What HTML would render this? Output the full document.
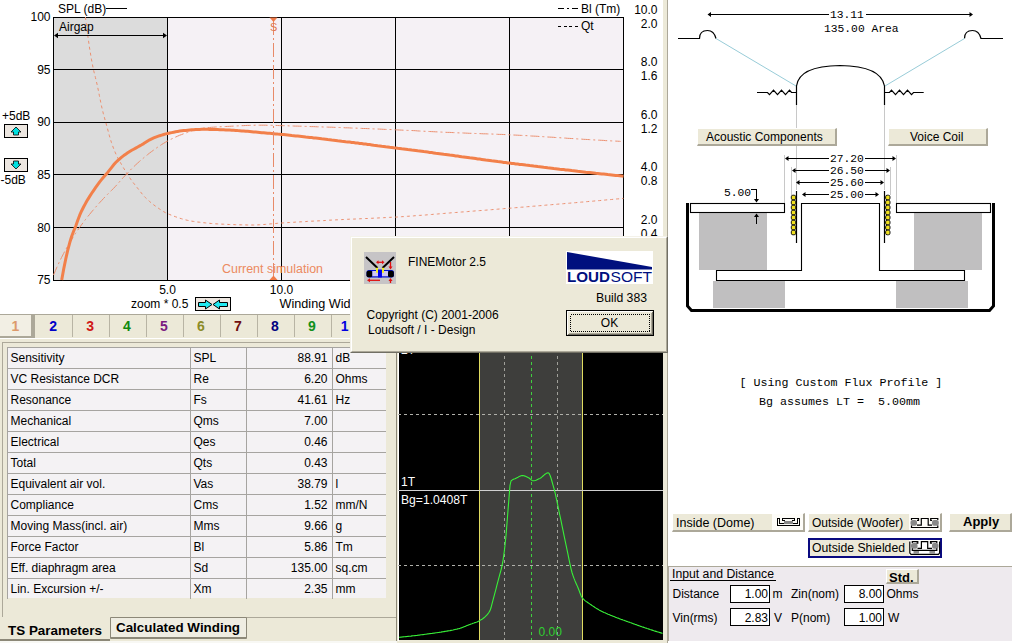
<!DOCTYPE html>
<html><head><meta charset="utf-8">
<style>
*{margin:0;padding:0;box-sizing:border-box}
html,body{width:1012px;height:643px;overflow:hidden;background:#ece9d8;font-family:"Liberation Sans",sans-serif;font-size:12px;color:#000}
.a{position:absolute}
svg{position:absolute;left:0;top:0;overflow:visible}
.mono{font-family:"Liberation Mono",monospace}
svg .m text, svg text.m{font-family:"Liberation Mono",monospace}
</style></head><body>

<!-- CHART PANEL -->
<div class="a" style="left:0;top:0;width:664px;height:314px;background:#fff"></div>
<svg width="664" height="314" style="left:0;top:0">
  <rect x="53" y="17" width="114" height="263" fill="#dcdcdc"/>
  <rect x="167" y="17" width="456" height="263" fill="#f5f1f5"/>
  <g stroke="#000" stroke-width="1" shape-rendering="crispEdges">
    <line x1="53" y1="17.5" x2="624" y2="17.5"/>
    <line x1="53" y1="69.5" x2="624" y2="69.5"/>
    <line x1="53" y1="122.5" x2="624" y2="122.5"/>
    <line x1="53" y1="174.5" x2="624" y2="174.5"/>
    <line x1="53" y1="227.5" x2="624" y2="227.5"/>
    <line x1="53" y1="280.5" x2="624" y2="280.5"/>
    <line x1="53.5" y1="17" x2="53.5" y2="281"/>
    <line x1="167.5" y1="17" x2="167.5" y2="281"/>
    <line x1="281.5" y1="17" x2="281.5" y2="281"/>
    <line x1="395.5" y1="17" x2="395.5" y2="281"/>
    <line x1="509.5" y1="17" x2="509.5" y2="281"/>
    <line x1="623.5" y1="17" x2="623.5" y2="281"/>
  </g>
  <g fill="none" stroke-linejoin="round">
    <path d="M85.4,17.0 L87.4,32.9 L89.4,47.0 L91.4,59.1 L93.4,69.5 L95.4,77.4 L97.4,85.8 L99.4,95.7 L101.4,105.6 L103.4,113.9 L105.4,121.1 L107.4,128.3 L109.4,135.8 L111.4,142.4 L113.4,148.0 L115.4,152.9 L117.4,157.2 L119.4,160.8 L121.4,164.3 L123.4,167.7 L125.4,171.0 L127.4,174.2 L129.4,177.3 L131.4,180.2 L133.4,182.9 L135.4,185.4 L137.4,187.9 L139.4,190.4 L141.4,193.0 L143.4,195.5 L145.4,197.6 L147.4,199.5 L149.4,201.3 L151.4,203.0 L153.4,204.6 L155.4,206.1 L157.4,207.5 L159.4,208.9 L161.4,210.2 L163.4,211.5 L165.4,212.6 L167.4,213.6 L169.4,214.4 L171.4,215.2 L173.4,216.0 L175.4,216.7 L177.4,217.4 L179.4,218.1 L181.4,218.7 L183.4,219.3 L185.4,219.8 L187.4,220.3 L189.4,220.7 L191.4,221.1 L193.4,221.4 L195.4,221.7 L197.4,222.0 L199.4,222.2 L201.4,222.5 L203.4,222.7 L205.4,222.9 L207.4,223.1 L209.4,223.3 L211.4,223.5 L213.4,223.6 L215.4,223.8 L217.4,223.9 L219.4,224.0 L221.4,224.1 L223.4,224.2 L225.4,224.3 L227.4,224.4 L229.4,224.5 L231.4,224.6 L233.4,224.6 L235.4,224.7 L237.4,224.7 L239.4,224.8 L241.4,224.8 L243.4,224.9 L245.4,224.9 L247.4,225.0 L249.4,225.0 L251.4,225.0 L253.4,225.0 L255.4,225.0 L257.4,224.9 L259.4,224.8 L261.4,224.7 L263.4,224.5 L265.4,224.4 L267.4,224.2 L269.4,224.0 L271.4,223.8 L273.4,223.6 L275.4,223.5 L277.4,223.3 L279.4,223.1 L281.4,223.0 L283.4,222.9 L285.4,222.7 L287.4,222.6 L289.4,222.5 L291.4,222.4 L293.4,222.3 L295.4,222.1 L297.4,222.0 L299.4,221.9 L301.4,221.8 L303.4,221.7 L305.4,221.6 L307.4,221.4 L309.4,221.3 L311.4,221.2 L313.4,221.1 L315.4,221.0 L317.4,220.9 L319.4,220.8 L321.4,220.7 L323.4,220.6 L325.4,220.5 L327.4,220.4 L329.4,220.2 L331.4,220.1 L333.4,220.0 L335.4,219.9 L337.4,219.8 L339.4,219.7 L341.4,219.6 L343.4,219.5 L345.4,219.4 L347.4,219.3 L349.4,219.2 L351.4,219.2 L353.4,219.1 L355.4,219.0 L357.4,218.9 L359.4,218.8 L361.4,218.7 L363.4,218.6 L365.4,218.5 L367.4,218.5 L369.4,218.4 L371.4,218.3 L373.4,218.2 L375.4,218.1 L377.4,218.0 L379.4,217.9 L381.4,217.8 L383.4,217.7 L385.4,217.6 L387.4,217.5 L389.4,217.4 L391.4,217.3 L393.4,217.2 L395.4,217.1 L397.4,217.0 L399.4,216.9 L401.4,216.7 L403.4,216.6 L405.4,216.5 L407.4,216.3 L409.4,216.2 L411.4,216.0 L413.4,215.9 L415.4,215.7 L417.4,215.6 L419.4,215.4 L421.4,215.3 L423.4,215.1 L425.4,215.0 L427.4,214.8 L429.4,214.6 L431.4,214.5 L433.4,214.3 L435.4,214.1 L437.4,214.0 L439.4,213.8 L441.4,213.6 L443.4,213.5 L445.4,213.3 L447.4,213.1 L449.4,213.0 L451.4,212.8 L453.4,212.7 L455.4,212.5 L457.4,212.4 L459.4,212.2 L461.4,212.0 L463.4,211.9 L465.4,211.7 L467.4,211.6 L469.4,211.4 L471.4,211.3 L473.4,211.1 L475.4,210.9 L477.4,210.8 L479.4,210.6 L481.4,210.5 L483.4,210.3 L485.4,210.2 L487.4,210.0 L489.4,209.8 L491.4,209.7 L493.4,209.5 L495.4,209.4 L497.4,209.2 L499.4,209.0 L501.4,208.9 L503.4,208.7 L505.4,208.5 L507.4,208.4 L509.4,208.2 L511.4,208.1 L513.4,207.9 L515.4,207.7 L517.4,207.6 L519.4,207.4 L521.4,207.2 L523.4,207.1 L525.4,206.9 L527.4,206.7 L529.4,206.6 L531.4,206.4 L533.4,206.2 L535.4,206.1 L537.4,205.9 L539.4,205.7 L541.4,205.6 L543.4,205.4 L545.4,205.2 L547.4,205.0 L549.4,204.9 L551.4,204.7 L553.4,204.5 L555.4,204.4 L557.4,204.2 L559.4,204.0 L561.4,203.9 L563.4,203.7 L565.4,203.5 L567.4,203.3 L569.4,203.2 L571.4,203.0 L573.4,202.8 L575.4,202.7 L577.4,202.5 L579.4,202.3 L581.4,202.1 L583.4,202.0 L585.4,201.8 L587.4,201.6 L589.4,201.4 L591.4,201.3 L593.4,201.1 L595.4,200.9 L597.4,200.7 L599.4,200.6 L601.4,200.4 L603.4,200.2 L605.4,200.0 L607.4,199.8 L609.4,199.7 L611.4,199.5 L613.4,199.3 L615.4,199.1 L617.4,198.9 L619.4,198.8 L621.4,198.6 L623.4,198.4 L623.5,198.4" stroke="#ec9070" stroke-width="1" stroke-dasharray="3 3"/>
    <path d="M53.5,275.0 L55.5,270.4 L57.5,265.9 L59.5,261.6 L61.5,257.5 L63.5,253.7 L65.5,250.0 L67.5,246.4 L69.5,243.0 L71.5,239.7 L73.5,236.5 L75.5,233.5 L77.5,230.5 L79.5,227.6 L81.5,224.8 L83.5,222.1 L85.5,219.5 L87.5,216.9 L89.5,214.5 L91.5,212.0 L93.5,209.7 L95.5,207.3 L97.5,205.1 L99.5,202.8 L101.5,200.7 L103.5,198.5 L105.5,196.4 L107.5,194.4 L109.5,192.4 L111.5,190.4 L113.5,188.4 L115.5,186.3 L117.5,184.1 L119.5,181.8 L121.5,179.5 L123.5,177.3 L125.5,175.2 L127.5,173.1 L129.5,171.0 L131.5,168.9 L133.5,167.0 L135.5,165.0 L137.5,163.2 L139.5,161.4 L141.5,159.7 L143.5,158.0 L145.5,156.3 L147.5,154.7 L149.5,153.1 L151.5,151.6 L153.5,150.2 L155.5,148.7 L157.5,147.3 L159.5,146.0 L161.5,144.6 L163.5,143.4 L165.5,142.2 L167.5,141.1 L169.5,140.0 L171.5,139.0 L173.5,138.0 L175.5,137.1 L177.5,136.2 L179.5,135.3 L181.5,134.6 L183.5,133.8 L185.5,133.1 L187.5,132.4 L189.5,131.7 L191.5,131.0 L193.5,130.3 L195.5,129.7 L197.5,129.2 L199.5,128.8 L201.5,128.4 L203.5,128.1 L205.5,127.9 L207.5,127.7 L209.5,127.5 L211.5,127.3 L213.5,127.2 L215.5,127.0 L217.5,126.9 L219.5,126.8 L221.5,126.7 L223.5,126.6 L225.5,126.5 L227.5,126.4 L229.5,126.3 L231.5,126.2 L233.5,126.1 L235.5,126.0 L237.5,125.9 L239.5,125.8 L241.5,125.7 L243.5,125.6 L245.5,125.5 L247.5,125.4 L249.5,125.4 L251.5,125.3 L253.5,125.3 L255.5,125.2 L257.5,125.2 L259.5,125.2 L261.5,125.2 L263.5,125.2 L265.5,125.2 L267.5,125.3 L269.5,125.3 L271.5,125.3 L273.5,125.4 L275.5,125.4 L277.5,125.5 L279.5,125.6 L281.5,125.6 L283.5,125.7 L285.5,125.7 L287.5,125.8 L289.5,125.9 L291.5,125.9 L293.5,126.0 L295.5,126.1 L297.5,126.1 L299.5,126.2 L301.5,126.2 L303.5,126.3 L305.5,126.4 L307.5,126.4 L309.5,126.5 L311.5,126.6 L313.5,126.6 L315.5,126.7 L317.5,126.8 L319.5,126.8 L321.5,126.9 L323.5,127.0 L325.5,127.0 L327.5,127.1 L329.5,127.2 L331.5,127.2 L333.5,127.3 L335.5,127.4 L337.5,127.5 L339.5,127.5 L341.5,127.6 L343.5,127.7 L345.5,127.8 L347.5,127.8 L349.5,127.9 L351.5,128.0 L353.5,128.1 L355.5,128.1 L357.5,128.2 L359.5,128.3 L361.5,128.4 L363.5,128.5 L365.5,128.5 L367.5,128.6 L369.5,128.7 L371.5,128.8 L373.5,128.9 L375.5,129.0 L377.5,129.0 L379.5,129.1 L381.5,129.2 L383.5,129.3 L385.5,129.4 L387.5,129.5 L389.5,129.5 L391.5,129.6 L393.5,129.7 L395.5,129.8 L397.5,129.9 L399.5,130.0 L401.5,130.1 L403.5,130.2 L405.5,130.3 L407.5,130.4 L409.5,130.4 L411.5,130.5 L413.5,130.6 L415.5,130.7 L417.5,130.9 L419.5,131.0 L421.5,131.1 L423.5,131.2 L425.5,131.3 L427.5,131.4 L429.5,131.5 L431.5,131.6 L433.5,131.7 L435.5,131.8 L437.5,131.9 L439.5,132.0 L441.5,132.1 L443.5,132.2 L445.5,132.3 L447.5,132.4 L449.5,132.4 L451.5,132.5 L453.5,132.6 L455.5,132.7 L457.5,132.8 L459.5,132.9 L461.5,132.9 L463.5,133.0 L465.5,133.1 L467.5,133.2 L469.5,133.3 L471.5,133.3 L473.5,133.4 L475.5,133.5 L477.5,133.5 L479.5,133.6 L481.5,133.7 L483.5,133.8 L485.5,133.8 L487.5,133.9 L489.5,134.0 L491.5,134.0 L493.5,134.1 L495.5,134.2 L497.5,134.3 L499.5,134.4 L501.5,134.4 L503.5,134.5 L505.5,134.6 L507.5,134.7 L509.5,134.8 L511.5,134.9 L513.5,135.0 L515.5,135.1 L517.5,135.2 L519.5,135.3 L521.5,135.4 L523.5,135.5 L525.5,135.6 L527.5,135.7 L529.5,135.9 L531.5,136.0 L533.5,136.1 L535.5,136.2 L537.5,136.3 L539.5,136.5 L541.5,136.6 L543.5,136.7 L545.5,136.8 L547.5,137.0 L549.5,137.1 L551.5,137.2 L553.5,137.3 L555.5,137.5 L557.5,137.6 L559.5,137.7 L561.5,137.9 L563.5,138.0 L565.5,138.1 L567.5,138.3 L569.5,138.4 L571.5,138.5 L573.5,138.6 L575.5,138.8 L577.5,138.9 L579.5,139.0 L581.5,139.1 L583.5,139.3 L585.5,139.4 L587.5,139.5 L589.5,139.6 L591.5,139.8 L593.5,139.9 L595.5,140.0 L597.5,140.1 L599.5,140.2 L601.5,140.3 L603.5,140.4 L605.5,140.6 L607.5,140.7 L609.5,140.8 L611.5,140.9 L613.5,141.0 L615.5,141.1 L617.5,141.2 L619.5,141.3 L620.6,141.4" stroke="#ec9070" stroke-width="1" stroke-dasharray="9 3 2 3"/>
    <path d="M61.7,280.0 L63.7,269.0 L65.7,259.2 L67.7,250.4 L69.7,242.8 L71.7,236.2 L73.7,231.0 L75.7,226.3 L77.7,220.6 L79.7,215.2 L81.7,210.7 L83.7,206.8 L85.7,203.1 L87.7,199.6 L89.7,196.4 L91.7,193.3 L93.7,190.3 L95.7,187.4 L97.7,184.6 L99.7,181.9 L101.7,179.4 L103.7,177.0 L105.7,174.7 L107.7,172.4 L109.7,169.9 L111.7,167.3 L113.7,164.8 L115.7,162.5 L117.7,160.6 L119.7,158.8 L121.7,157.1 L123.7,155.6 L125.7,154.2 L127.7,152.8 L129.7,151.5 L131.7,150.3 L133.7,149.2 L135.7,148.1 L137.7,147.0 L139.7,145.9 L141.7,144.8 L143.7,143.6 L145.7,142.3 L147.7,141.0 L149.7,139.8 L151.7,138.8 L153.7,137.9 L155.7,137.1 L157.7,136.4 L159.7,135.7 L161.7,135.1 L163.7,134.5 L165.7,133.9 L167.7,133.5 L169.7,133.0 L171.7,132.6 L173.7,132.2 L175.7,131.8 L177.7,131.4 L179.7,131.1 L181.7,130.8 L183.7,130.6 L185.7,130.4 L187.7,130.2 L189.7,130.0 L191.7,129.8 L193.7,129.7 L195.7,129.5 L197.7,129.4 L199.7,129.4 L201.7,129.3 L203.7,129.3 L205.7,129.3 L207.7,129.3 L209.7,129.4 L211.7,129.4 L213.7,129.5 L215.7,129.5 L217.7,129.6 L219.7,129.7 L221.7,129.7 L223.7,129.8 L225.7,129.9 L227.7,130.0 L229.7,130.1 L231.7,130.2 L233.7,130.3 L235.7,130.4 L237.7,130.6 L239.7,130.7 L241.7,130.9 L243.7,131.0 L245.7,131.2 L247.7,131.3 L249.7,131.5 L251.7,131.7 L253.7,131.9 L255.7,132.1 L257.7,132.3 L259.7,132.5 L261.7,132.7 L263.7,132.8 L265.7,133.0 L267.7,133.2 L269.7,133.3 L271.7,133.5 L273.7,133.7 L275.7,133.9 L277.7,134.1 L279.7,134.2 L281.7,134.4 L283.7,134.6 L285.7,134.8 L287.7,135.0 L289.7,135.2 L291.7,135.5 L293.7,135.7 L295.7,135.9 L297.7,136.1 L299.7,136.3 L301.7,136.5 L303.7,136.7 L305.7,137.0 L307.7,137.2 L309.7,137.4 L311.7,137.6 L313.7,137.9 L315.7,138.1 L317.7,138.3 L319.7,138.5 L321.7,138.8 L323.7,139.0 L325.7,139.2 L327.7,139.5 L329.7,139.7 L331.7,140.0 L333.7,140.2 L335.7,140.4 L337.7,140.7 L339.7,140.9 L341.7,141.2 L343.7,141.4 L345.7,141.7 L347.7,141.9 L349.7,142.1 L351.7,142.4 L353.7,142.6 L355.7,142.9 L357.7,143.1 L359.7,143.4 L361.7,143.6 L363.7,143.9 L365.7,144.1 L367.7,144.4 L369.7,144.6 L371.7,144.9 L373.7,145.2 L375.7,145.4 L377.7,145.7 L379.7,145.9 L381.7,146.2 L383.7,146.4 L385.7,146.7 L387.7,146.9 L389.7,147.2 L391.7,147.4 L393.7,147.7 L395.7,147.9 L397.7,148.2 L399.7,148.4 L401.7,148.7 L403.7,148.9 L405.7,149.2 L407.7,149.5 L409.7,149.7 L411.7,150.0 L413.7,150.2 L415.7,150.5 L417.7,150.8 L419.7,151.0 L421.7,151.3 L423.7,151.6 L425.7,151.8 L427.7,152.1 L429.7,152.4 L431.7,152.6 L433.7,152.9 L435.7,153.2 L437.7,153.4 L439.7,153.7 L441.7,154.0 L443.7,154.3 L445.7,154.5 L447.7,154.8 L449.7,155.1 L451.7,155.3 L453.7,155.6 L455.7,155.9 L457.7,156.1 L459.7,156.4 L461.7,156.7 L463.7,156.9 L465.7,157.2 L467.7,157.5 L469.7,157.8 L471.7,158.0 L473.7,158.3 L475.7,158.6 L477.7,158.9 L479.7,159.1 L481.7,159.4 L483.7,159.7 L485.7,160.0 L487.7,160.2 L489.7,160.5 L491.7,160.8 L493.7,161.0 L495.7,161.3 L497.7,161.6 L499.7,161.8 L501.7,162.1 L503.7,162.4 L505.7,162.6 L507.7,162.9 L509.7,163.1 L511.7,163.4 L513.7,163.6 L515.7,163.9 L517.7,164.1 L519.7,164.4 L521.7,164.6 L523.7,164.8 L525.7,165.1 L527.7,165.3 L529.7,165.6 L531.7,165.8 L533.7,166.1 L535.7,166.3 L537.7,166.6 L539.7,166.8 L541.7,167.0 L543.7,167.3 L545.7,167.5 L547.7,167.8 L549.7,168.0 L551.7,168.2 L553.7,168.5 L555.7,168.7 L557.7,168.9 L559.7,169.2 L561.7,169.4 L563.7,169.6 L565.7,169.9 L567.7,170.1 L569.7,170.3 L571.7,170.6 L573.7,170.8 L575.7,171.0 L577.7,171.3 L579.7,171.5 L581.7,171.7 L583.7,171.9 L585.7,172.2 L587.7,172.4 L589.7,172.6 L591.7,172.8 L593.7,173.0 L595.7,173.3 L597.7,173.5 L599.7,173.7 L601.7,173.9 L603.7,174.1 L605.7,174.3 L607.7,174.6 L609.7,174.8 L611.7,175.0 L613.7,175.2 L615.7,175.4 L617.7,175.6 L619.7,175.8 L621.7,176.0 L623.5,176.2" stroke="#f2804a" stroke-width="3"/>
  </g>
  <!-- current simulation marker -->
  <line x1="273.5" y1="21" x2="273.5" y2="276" stroke="#e88a68" stroke-width="1" stroke-dasharray="14 3 2 3"/>
  <path d="M269.5,17.5 L277.5,17.5 L273.5,22 Z" fill="#f07a48"/>
  <path d="M269.5,280 L277.5,280 L273.5,275.5 Z" fill="#f07a48"/>
  <text x="270" y="30.5" fill="#e07850" font-size="11">S</text>
  <text x="222" y="272.5" fill="#ec8a60" textLength="101" lengthAdjust="spacingAndGlyphs">Current simulation</text>
  <!-- airgap -->
  <text x="59" y="30.5">Airgap</text>
  <line x1="55" y1="35.5" x2="166" y2="35.5" stroke="#000" stroke-width="1" shape-rendering="crispEdges"/>
  <path d="M54,35.5 L58,32.8 L58,38.2 Z M167,35.5 L163,32.8 L163,38.2 Z" fill="#000"/>
  <!-- axis labels -->
  <g text-anchor="end">
    <text x="50.5" y="21.2">100</text>
    <text x="50.5" y="73.8">95</text>
    <text x="50.5" y="126.4">90</text>
    <text x="50.5" y="179">85</text>
    <text x="50.5" y="231.6">80</text>
    <text x="50.5" y="284.2">75</text>
  </g>
  <g text-anchor="end">
    <text x="657.5" y="13.9">10.0</text>
    <text x="657.5" y="28.0">2.0</text>
    <text x="657.5" y="66.2">8.0</text>
    <text x="657.5" y="80.2">1.6</text>
    <text x="657.5" y="118.8">6.0</text>
    <text x="657.5" y="132.8">1.2</text>
    <text x="657.5" y="171.4">4.0</text>
    <text x="657.5" y="185.4">0.8</text>
    <text x="657.5" y="224.0">2.0</text>
    <text x="657.5" y="238.0">0.4</text>
  </g>
  <text x="167.5" y="293.5" text-anchor="middle">5.0</text>
  <text x="281.5" y="293.5" text-anchor="middle">10.0</text>
  <text x="131" y="308">zoom * 0.5</text>
  <text x="279.5" y="308" textLength="71" lengthAdjust="spacingAndGlyphs">Winding Wid</text>
  <text x="58" y="13">SPL (dB)</text>
  <line x1="106" y1="8.5" x2="127" y2="8.5" stroke="#000" stroke-width="1" shape-rendering="crispEdges"/>
  <text x="581" y="13">Bl (Tm)</text>
  <path d="M558,8.5 H564 M567,8.5 H569 M571.5,8.5 H578" stroke="#000" stroke-width="1" shape-rendering="crispEdges"/>
  <text x="581" y="29.5">Qt</text>
  <path d="M558,26.5 H561 M563.5,26.5 H566.5 M569,26.5 H572 M574.5,26.5 H577.5" stroke="#000" stroke-width="1" shape-rendering="crispEdges"/>
  <text x="2" y="119.5">+5dB</text>
  <text x="0.5" y="184.2">-5dB</text>
  <!-- +5/-5 buttons -->
  <rect x="4.5" y="124.5" width="23" height="13" fill="#ece6e0" stroke="#000"/>
  <path d="M16,127 L21,132 L18.5,132 L18.5,135 L13.5,135 L13.5,132 L11,132 Z" fill="#00e0e0" stroke="#000" stroke-width="0.8"/>
  <rect x="4.5" y="158.5" width="23" height="13" fill="#ece6e0" stroke="#000"/>
  <path d="M16,169 L21,164 L18.5,164 L18.5,161 L13.5,161 L13.5,164 L11,164 Z" fill="#00e0e0" stroke="#000" stroke-width="0.8"/>
  <!-- zoom button -->
  <rect x="195.5" y="297.5" width="35" height="13" fill="#ece6e0" stroke="#000"/>
  <path d="M198.5,302.5 H205.5 V300 L212,304.5 L205.5,309 V306.5 H198.5 Z M227.5,302.5 H219.5 V300 L213,304.5 L219.5,309 V306.5 H227.5 Z" fill="#20e8f0" stroke="#000" stroke-width="1"/>
</svg>

<!-- TAB ROW -->
<div class="a" style="left:0;top:314px;width:664px;height:1px;background:#aca899"></div>
<div class="a" style="left:0;top:315px;width:32px;height:21px;background:#f2efe4"></div>
<div class="a" style="left:31px;top:315px;width:4px;height:23px;background:#aca899"></div>
<div class="a" style="left:0;top:336px;width:35px;height:2px;background:#aca899"></div>
<div class="a" style="left:72px;top:315px;width:1px;height:22px;background:#b8b4a4"></div>
<div class="a" style="left:109px;top:315px;width:1px;height:22px;background:#b8b4a4"></div>
<div class="a" style="left:146px;top:315px;width:1px;height:22px;background:#b8b4a4"></div>
<div class="a" style="left:183px;top:315px;width:1px;height:22px;background:#b8b4a4"></div>
<div class="a" style="left:220px;top:315px;width:1px;height:22px;background:#b8b4a4"></div>
<div class="a" style="left:257px;top:315px;width:1px;height:22px;background:#b8b4a4"></div>
<div class="a" style="left:294px;top:315px;width:1px;height:22px;background:#b8b4a4"></div>
<div class="a" style="left:331px;top:315px;width:1px;height:22px;background:#b8b4a4"></div>
<div class="a" style="left:368px;top:315px;width:1px;height:22px;background:#b8b4a4"></div>
<svg width="664" height="30" style="left:0;top:310px"><text x="15.4" y="20.8" text-anchor="middle" font-weight="bold" font-size="14" fill="#dc9a6c">1</text><text x="53.1" y="20.8" text-anchor="middle" font-weight="bold" font-size="14" fill="#0000c8">2</text><text x="90.1" y="20.8" text-anchor="middle" font-weight="bold" font-size="14" fill="#d01818">3</text><text x="127.0" y="20.8" text-anchor="middle" font-weight="bold" font-size="14" fill="#108a10">4</text><text x="164.0" y="20.8" text-anchor="middle" font-weight="bold" font-size="14" fill="#7a1a80">5</text><text x="201.0" y="20.8" text-anchor="middle" font-weight="bold" font-size="14" fill="#8c8c28">6</text><text x="238.0" y="20.8" text-anchor="middle" font-weight="bold" font-size="14" fill="#701010">7</text><text x="275.0" y="20.8" text-anchor="middle" font-weight="bold" font-size="14" fill="#000080">8</text><text x="311.9" y="20.8" text-anchor="middle" font-weight="bold" font-size="14" fill="#10901c">9</text><text x="344.7" y="20.8" text-anchor="middle" font-weight="bold" font-size="14" fill="#0000e0">1</text></svg>
<div class="a" style="left:0;top:338px;width:664px;height:1px;background:#fff"></div>
<!-- TABLE PANEL -->
<div class="a" style="left:2px;top:342px;width:395px;height:275px;border-top:1px solid #aca899;border-left:1px solid #aca899;border-right:1px solid #8c8878"></div>
<div class="a" style="left:7px;top:347px;width:379px;height:251px;background:#f4f2f4"></div>
<svg width="400" height="300" style="left:0;top:330px"><g stroke="#a6a4a0" stroke-width="1" shape-rendering="crispEdges"><line x1="7" y1="17.5" x2="386" y2="17.5"/><line x1="7" y1="38.5" x2="386" y2="38.5"/><line x1="7" y1="59.5" x2="386" y2="59.5"/><line x1="7" y1="80.5" x2="386" y2="80.5"/><line x1="7" y1="101.5" x2="386" y2="101.5"/><line x1="7" y1="122.5" x2="386" y2="122.5"/><line x1="7" y1="143.5" x2="386" y2="143.5"/><line x1="7" y1="164.5" x2="386" y2="164.5"/><line x1="7" y1="185.5" x2="386" y2="185.5"/><line x1="7" y1="206.5" x2="386" y2="206.5"/><line x1="7" y1="227.5" x2="386" y2="227.5"/><line x1="7" y1="248.5" x2="386" y2="248.5"/><line x1="7.5" y1="17" x2="7.5" y2="269"/><line x1="190.5" y1="17" x2="190.5" y2="269"/><line x1="246.5" y1="17" x2="246.5" y2="269"/><line x1="332.5" y1="17" x2="332.5" y2="269"/></g><text x="10.5" y="31.5">Sensitivity</text><text x="193.5" y="31.5">SPL</text><text x="327.5" y="31.5" text-anchor="end">88.91</text><text x="335.5" y="31.5">dB</text><text x="10.5" y="52.5">VC Resistance DCR</text><text x="193.5" y="52.5">Re</text><text x="327.5" y="52.5" text-anchor="end">6.20</text><text x="335.5" y="52.5">Ohms</text><text x="10.5" y="73.5">Resonance</text><text x="193.5" y="73.5">Fs</text><text x="327.5" y="73.5" text-anchor="end">41.61</text><text x="335.5" y="73.5">Hz</text><text x="10.5" y="94.5">Mechanical</text><text x="193.5" y="94.5">Qms</text><text x="327.5" y="94.5" text-anchor="end">7.00</text><text x="335.5" y="94.5"></text><text x="10.5" y="115.5">Electrical</text><text x="193.5" y="115.5">Qes</text><text x="327.5" y="115.5" text-anchor="end">0.46</text><text x="335.5" y="115.5"></text><text x="10.5" y="136.5">Total</text><text x="193.5" y="136.5">Qts</text><text x="327.5" y="136.5" text-anchor="end">0.43</text><text x="335.5" y="136.5"></text><text x="10.5" y="157.5">Equivalent air vol.</text><text x="193.5" y="157.5">Vas</text><text x="327.5" y="157.5" text-anchor="end">38.79</text><text x="335.5" y="157.5">l</text><text x="10.5" y="178.5">Compliance</text><text x="193.5" y="178.5">Cms</text><text x="327.5" y="178.5" text-anchor="end">1.52</text><text x="335.5" y="178.5">mm/N</text><text x="10.5" y="199.5">Moving Mass(incl. air)</text><text x="193.5" y="199.5">Mms</text><text x="327.5" y="199.5" text-anchor="end">9.66</text><text x="335.5" y="199.5">g</text><text x="10.5" y="220.5">Force Factor</text><text x="193.5" y="220.5">Bl</text><text x="327.5" y="220.5" text-anchor="end">5.86</text><text x="335.5" y="220.5">Tm</text><text x="10.5" y="241.5">Eff. diaphragm area</text><text x="193.5" y="241.5">Sd</text><text x="327.5" y="241.5" text-anchor="end">135.00</text><text x="335.5" y="241.5">sq.cm</text><text x="10.5" y="262.5">Lin. Excursion +/-</text><text x="193.5" y="262.5">Xm</text><text x="327.5" y="262.5" text-anchor="end">2.35</text><text x="335.5" y="262.5">mm</text></svg>
<div class="a" style="left:246px;top:617px;width:151px;height:1px;background:#aca899"></div>
<div class="a" style="left:110px;top:617px;width:137px;height:22px;background:#efede2;border:1px solid #8c8878;border-bottom:2px solid #8c8878;border-radius:1px"></div>
<div class="a" style="left:0;top:639px;width:110px;height:2px;background:#8c8878"></div>
<div class="a" style="left:0;top:641px;width:397px;height:2px;background:#f8f8f4"></div>
<svg width="400" height="40" style="left:0;top:610px"><text x="8" y="24.8" font-weight="bold" font-size="13" textLength="94" lengthAdjust="spacingAndGlyphs">TS Parameters</text><text x="116" y="22.3" font-weight="bold" font-size="13" textLength="124" lengthAdjust="spacingAndGlyphs">Calculated Winding</text></svg>
<!-- FLUX PANEL -->
<div class="a" style="left:396px;top:338px;width:1px;height:303px;background:#8c8878"></div>
<div class="a" style="left:397px;top:338px;width:1px;height:303px;background:#ece9d8"></div>
<div class="a" style="left:398px;top:338px;width:1px;height:303px;background:#fff"></div>
<svg width="270" height="305" style="left:398px;top:338px">
  <rect x="1" y="0" width="264" height="302" fill="#000"/>
  <rect x="81" y="0" width="104" height="302" fill="#3e3e3c"/>
  <g shape-rendering="crispEdges" stroke-width="1" fill="none">
    <line x1="81.5" y1="0" x2="81.5" y2="302" stroke="#e0dc60"/>
    <line x1="184.5" y1="0" x2="184.5" y2="302" stroke="#e0dc60"/>
    <line x1="106.5" y1="0" x2="106.5" y2="302" stroke="#a0a09a" stroke-dasharray="3 3"/>
    <line x1="159.5" y1="0" x2="159.5" y2="302" stroke="#a0a09a" stroke-dasharray="3 3"/>
    <line x1="133.5" y1="0" x2="133.5" y2="302" stroke="#40d040" stroke-dasharray="3 3"/>
    <line x1="0" y1="76.5" x2="265" y2="76.5" stroke="#b0b0aa" stroke-dasharray="3 3"/>
    <line x1="0" y1="227.5" x2="265" y2="227.5" stroke="#b0b0aa" stroke-dasharray="3 3"/>
    <line x1="0" y1="152.5" x2="265" y2="152.5" stroke="#d0d0d0"/>
  </g>
  <g transform="translate(-398,-338)">
    <path d="M399.0,637.3 L400.0,637.2 L401.0,637.1 L402.0,637.0 L403.0,636.9 L404.0,636.8 L405.0,636.7 L406.0,636.6 L407.0,636.5 L408.0,636.4 L409.0,636.3 L410.0,636.2 L411.0,636.1 L412.0,635.9 L413.0,635.8 L414.0,635.7 L415.0,635.6 L416.0,635.5 L417.0,635.4 L418.0,635.2 L419.0,635.1 L420.0,635.0 L421.0,634.8 L422.0,634.7 L423.0,634.6 L424.0,634.5 L425.0,634.3 L426.0,634.2 L427.0,634.0 L428.0,633.9 L429.0,633.8 L430.0,633.6 L431.0,633.5 L432.0,633.4 L433.0,633.2 L434.0,633.1 L435.0,633.0 L436.0,632.8 L437.0,632.7 L438.0,632.5 L439.0,632.4 L440.0,632.2 L441.0,632.1 L442.0,631.9 L443.0,631.8 L444.0,631.6 L445.0,631.4 L446.0,631.3 L447.0,631.1 L448.0,630.9 L449.0,630.7 L450.0,630.6 L451.0,630.4 L452.0,630.2 L453.0,630.0 L454.0,629.7 L455.0,629.5 L456.0,629.3 L457.0,629.1 L458.0,628.8 L459.0,628.6 L460.0,628.3 L461.0,627.9 L462.0,627.6 L463.0,627.2 L464.0,626.8 L465.0,626.4 L466.0,626.0 L467.0,625.6 L468.0,625.2 L469.0,624.8 L470.0,624.4 L471.0,624.0 L472.0,623.7 L473.0,623.3 L474.0,623.0 L475.0,622.6 L476.0,622.3 L477.0,621.9 L478.0,621.4 L479.0,620.9 L480.0,620.4 L481.0,619.8 L482.0,619.2 L483.0,618.5 L484.0,617.7 L485.0,616.9 L486.0,615.9 L487.0,614.9 L488.0,613.6 L489.0,612.2 L490.0,610.6 L491.0,607.8 L492.0,603.9 L493.0,600.1 L494.0,596.4 L495.0,592.6 L496.0,588.8 L497.0,584.9 L498.0,581.1 L499.0,577.3 L500.0,573.7 L501.0,570.1 L502.0,565.9 L503.0,560.7 L504.0,553.7 L505.0,545.3 L506.0,535.6 L507.0,523.2 L508.0,510.2 L509.0,497.9 L510.0,485.4 L511.0,481.0 L512.0,480.1 L513.0,479.5 L514.0,479.1 L515.0,478.7 L516.0,478.2 L517.0,477.7 L518.0,477.2 L519.0,476.6 L520.0,476.2 L521.0,475.8 L522.0,475.6 L523.0,475.6 L524.0,475.8 L525.0,476.1 L526.0,476.5 L527.0,477.0 L528.0,477.5 L529.0,478.0 L530.0,478.8 L531.0,479.7 L532.0,480.4 L533.0,480.8 L534.0,480.7 L535.0,480.5 L536.0,480.2 L537.0,479.8 L538.0,479.3 L539.0,478.8 L540.0,478.4 L541.0,477.7 L542.0,476.9 L543.0,476.0 L544.0,475.1 L545.0,474.3 L546.0,473.6 L547.0,473.0 L548.0,472.8 L549.0,473.3 L550.0,475.2 L551.0,478.0 L552.0,481.5 L553.0,485.2 L554.0,488.7 L555.0,492.5 L556.0,496.9 L557.0,501.6 L558.0,506.4 L559.0,511.3 L560.0,516.0 L561.0,520.7 L562.0,525.6 L563.0,530.4 L564.0,535.3 L565.0,540.2 L566.0,544.9 L567.0,549.6 L568.0,554.4 L569.0,559.4 L570.0,564.1 L571.0,568.6 L572.0,572.5 L573.0,575.6 L574.0,578.4 L575.0,580.9 L576.0,583.2 L577.0,585.4 L578.0,587.8 L579.0,590.3 L580.0,593.0 L581.0,595.5 L582.0,597.4 L583.0,598.7 L584.0,599.7 L585.0,600.6 L586.0,601.4 L587.0,602.0 L588.0,602.7 L589.0,603.4 L590.0,604.1 L591.0,604.8 L592.0,605.5 L593.0,606.1 L594.0,606.8 L595.0,607.5 L596.0,608.1 L597.0,608.7 L598.0,609.3 L599.0,609.9 L600.0,610.4 L601.0,610.9 L602.0,611.4 L603.0,611.9 L604.0,612.4 L605.0,612.8 L606.0,613.3 L607.0,613.7 L608.0,614.2 L609.0,614.6 L610.0,615.0 L611.0,615.4 L612.0,615.8 L613.0,616.2 L614.0,616.6 L615.0,617.0 L616.0,617.4 L617.0,617.8 L618.0,618.1 L619.0,618.5 L620.0,618.9 L621.0,619.3 L622.0,619.6 L623.0,620.0 L624.0,620.3 L625.0,620.7 L626.0,621.1 L627.0,621.4 L628.0,621.8 L629.0,622.1 L630.0,622.5 L631.0,622.8 L632.0,623.2 L633.0,623.6 L634.0,623.9 L635.0,624.3 L636.0,624.6 L637.0,625.0 L638.0,625.4 L639.0,625.7 L640.0,626.1 L641.0,626.4 L642.0,626.8 L643.0,627.1 L644.0,627.4 L645.0,627.8 L646.0,628.1 L647.0,628.5 L648.0,628.8 L649.0,629.1 L650.0,629.5 L651.0,629.8 L652.0,630.1 L653.0,630.4 L654.0,630.8 L655.0,631.1 L656.0,631.4 L657.0,631.7 L658.0,632.0 L659.0,632.3 L660.0,632.6 L661.0,632.9 L662.0,633.2 L662.5,633.4" stroke="#38f038" stroke-width="1.1" fill="none" stroke-linejoin="round"/>
  </g>
  <text x="3" y="15.5" fill="#fff">2T</text>
  <text x="3" y="148" fill="#fff">1T</text>
  <text x="3" y="166" fill="#fff" textLength="66.5" lengthAdjust="spacingAndGlyphs">Bg=1.0408T</text>
  <text x="140.5" y="297.5" fill="#30d030">0.00</text>
</svg>
<div class="a" style="left:663px;top:0;width:5px;height:643px;background:#ece9d8"></div>
<div class="a" style="left:667px;top:0;width:1px;height:643px;background:#aca899"></div>
<!-- RIGHT PANEL -->
<div class="a" style="left:668px;top:0;width:344px;height:566px;background:#fff"></div>
<svg width="1012" height="643" style="left:0;top:0">
  <g fill="none" stroke="#000" stroke-width="1">
    <!-- top dimension -->
    <path d="M710,14.5 L829,14.5 M866,14.5 L971,14.5"/>
  </g>
  <path d="M707.5,14.5 L711,12 L711,17 Z M973,14.5 L969.5,12 L969.5,17 Z" fill="#000"/>
  <g class="m" font-size="11.3">
    <text x="830" y="18" class="m">13.11</text>
    <text x="824" y="31.8" class="m">135.00 Area</text>
  </g>
  <!-- surrounds -->
  <g fill="none" stroke="#000" stroke-width="1.2">
    <path d="M678,38.5 L699.5,38.5 Q699.5,30.5 707.5,30.5 Q714,30.5 716,38.5"/>
    <path d="M1003,38.5 L981,38.5 Q979,30.5 972.5,30.5 Q964.5,30.5 964.5,38.5"/>
    <path d="M796.5,105 L796.5,86 Q799,66 840,65.5 Q881,66 884.5,86 L884.5,105"/>
    <path d="M757,92.5 H767.5 L769.5,94.6 L773.5,90.1 L777.5,94.6 L781.5,90.1 L785.5,94.6 L789.5,90.1 L791.5,92.5 H796.5"/>
    <path d="M884.5,92.5 H889.5 L891.5,90.1 L895.5,94.6 L899.5,90.1 L903.5,94.6 L907.5,90.1 L911.5,94.6 L913.5,92.5 H923.7"/>
  </g>
  <g stroke="#98ccd8" stroke-width="1" fill="none">
    <path d="M716,38.5 L796,86"/>
    <path d="M964.5,38.5 L885,86"/>
  </g>
  <!-- thin gray guide lines -->
  <g stroke="#c8c8c8" stroke-width="1" shape-rendering="crispEdges">
    <line x1="796.5" y1="105" x2="796.5" y2="190"/>
    <line x1="884.5" y1="105" x2="884.5" y2="190"/>
    <line x1="784.5" y1="155" x2="784.5" y2="203"/>
    <line x1="896.5" y1="155" x2="896.5" y2="203"/>
    <line x1="791.5" y1="167" x2="791.5" y2="195"/>
    <line x1="890.5" y1="167" x2="890.5" y2="195"/>
  </g>
  <!-- dimension arrows -->
  <g stroke="#000" stroke-width="1" shape-rendering="crispEdges" fill="none">
    <path d="M786,158.5 L829,158.5 M865,158.5 L895,158.5"/>
    <path d="M793,170.5 L829,170.5 M865,170.5 L889,170.5"/>
    <path d="M797,182.5 L829,182.5 M865,182.5 L883,182.5"/>
    <path d="M803,194.5 L829,194.5 M865,194.5 L878,194.5"/>
  </g>
  <g fill="#000">
    <path d="M785,158.5 L788.5,156.0 L788.5,161.0 Z M896,158.5 L892.5,156.0 L892.5,161.0 Z"/><path d="M792,170.5 L795.5,168.0 L795.5,173.0 Z M890,170.5 L886.5,168.0 L886.5,173.0 Z"/><path d="M796,182.5 L799.5,180.0 L799.5,185.0 Z M884,182.5 L880.5,180.0 L880.5,185.0 Z"/><path d="M802,194.5 L805.5,192.0 L805.5,197.0 Z M879,194.5 L875.5,192.0 L875.5,197.0 Z"/>
  </g>
  <g class="m" font-size="11.3">
    <text x="830" y="162">27.20</text>
    <text x="830" y="174">26.50</text>
    <text x="830" y="186">25.60</text>
    <text x="830" y="198">25.00</text>
    <text x="724" y="195.5">5.00</text>
  </g>
  <!-- 5.00 bracket -->
  <path d="M751,189.5 L756.5,189.5 L756.5,200" stroke="#000" stroke-width="1" fill="none" shape-rendering="crispEdges"/>
  <path d="M756.5,202.5 L754,199 L759,199 Z" fill="#000"/>
  <!-- magnets -->
  <g fill="#c0bfc0">
    <rect x="699" y="213" width="68" height="57"/>
    <rect x="914" y="213" width="68" height="57"/>
    <rect x="713" y="281" width="72" height="27"/>
    <rect x="896" y="281" width="72" height="27"/>
  </g>
  <!-- plates -->
  <g fill="#fff" stroke="#000" stroke-width="1.1">
    <rect x="690.5" y="203.5" width="94" height="9"/>
    <rect x="896.5" y="203.5" width="94" height="9"/>
  </g>
  <path d="M716.5,280.5 L716.5,270.5 L801.5,270.5 L801.5,203.5 L879.5,203.5 L879.5,270.5 L964.5,270.5 L964.5,280.5 Z" fill="#fff" stroke="#000" stroke-width="1.1"/>
  <path d="M756.5,224 L756.5,216" stroke="#000" stroke-width="1" fill="none" shape-rendering="crispEdges"/>
  <path d="M756.5,213.5 L754,217 L759,217 Z" fill="#000"/>
  <!-- frame -->
  <path d="M687.5,203 L687.5,306 L691.5,310.5 L989.5,310.5 L993.5,306 L993.5,203" fill="none" stroke="#000" stroke-width="3"/>
  <!-- coil former -->
  <g stroke="#000" stroke-width="1.2">
    <line x1="796.5" y1="191" x2="796.5" y2="243"/>
    <line x1="884.5" y1="191" x2="884.5" y2="243"/>
  </g>
  <rect x="791.3" y="195.2" width="4.4" height="4.6" rx="1.6" fill="#f0e020" stroke="#000" stroke-width="0.9"/><rect x="791.3" y="200.2" width="4.4" height="4.6" rx="1.6" fill="#f0e020" stroke="#000" stroke-width="0.9"/><rect x="791.3" y="205.2" width="4.4" height="4.6" rx="1.6" fill="#f0e020" stroke="#000" stroke-width="0.9"/><rect x="791.3" y="210.2" width="4.4" height="4.6" rx="1.6" fill="#f0e020" stroke="#000" stroke-width="0.9"/><rect x="791.3" y="215.2" width="4.4" height="4.6" rx="1.6" fill="#f0e020" stroke="#000" stroke-width="0.9"/><rect x="791.3" y="220.2" width="4.4" height="4.6" rx="1.6" fill="#f0e020" stroke="#000" stroke-width="0.9"/><rect x="791.3" y="225.2" width="4.4" height="4.6" rx="1.6" fill="#f0e020" stroke="#000" stroke-width="0.9"/><rect x="791.3" y="230.2" width="4.4" height="4.6" rx="1.6" fill="#f0e020" stroke="#000" stroke-width="0.9"/><rect x="885.6" y="195.2" width="4.4" height="4.6" rx="1.6" fill="#f0e020" stroke="#000" stroke-width="0.9"/><rect x="885.6" y="200.2" width="4.4" height="4.6" rx="1.6" fill="#f0e020" stroke="#000" stroke-width="0.9"/><rect x="885.6" y="205.2" width="4.4" height="4.6" rx="1.6" fill="#f0e020" stroke="#000" stroke-width="0.9"/><rect x="885.6" y="210.2" width="4.4" height="4.6" rx="1.6" fill="#f0e020" stroke="#000" stroke-width="0.9"/><rect x="885.6" y="215.2" width="4.4" height="4.6" rx="1.6" fill="#f0e020" stroke="#000" stroke-width="0.9"/><rect x="885.6" y="220.2" width="4.4" height="4.6" rx="1.6" fill="#f0e020" stroke="#000" stroke-width="0.9"/><rect x="885.6" y="225.2" width="4.4" height="4.6" rx="1.6" fill="#f0e020" stroke="#000" stroke-width="0.9"/><rect x="885.6" y="230.2" width="4.4" height="4.6" rx="1.6" fill="#f0e020" stroke="#000" stroke-width="0.9"/>
</svg>
<!-- BUTTONS -->
<style>
.btn{position:absolute;background:#ece9d8;border-top:1px solid #fff;border-left:1px solid #fff;border-right:2px solid #aca899;border-bottom:2px solid #aca899;font-size:12px;white-space:nowrap}
</style>
<div class="btn" style="left:697px;top:128px;width:140px;height:18px"></div>
<div class="btn" style="left:888px;top:128px;width:100px;height:18px"></div>
<div class="btn" style="left:672px;top:513px;width:133px;height:19px"></div>
<div class="a" style="left:772px;top:514px;width:31px;height:16px;background:#fdfcf8"></div>
<div class="btn" style="left:808px;top:513px;width:134px;height:19px"></div>
<div class="a" style="left:909px;top:514px;width:31px;height:16px;background:#fdfcf8"></div>
<div class="btn" style="left:949px;top:513px;width:63px;height:19px"></div>
<div class="a" style="left:808px;top:538px;width:134px;height:20px;background:#ece9d8;border:2px solid #0a0a80"></div>
<svg width="1012" height="643" style="left:0;top:0">
  <text x="706" y="141">Acoustic Components</text>
  <text x="910" y="141">Voice Coil</text>
  <text x="676" y="527" textLength="78.5" lengthAdjust="spacingAndGlyphs">Inside (Dome)</text>
  <text x="812" y="527">Outside (Woofer)</text>
  <text x="963" y="526.2" font-weight="bold" font-size="13">Apply</text>
  <text x="812" y="552" textLength="93" lengthAdjust="spacingAndGlyphs">Outside Shielded</text>
  <g class="m" font-size="11.67">
    <text x="739.5" y="385.7" xml:space="preserve">[ Using Custom Flux Profile ]</text>
    <text x="759" y="405.2" xml:space="preserve">Bg assumes LT =  5.00mm</text>
  </g>
  <!-- inside dome icon -->
  <g fill="#000" shape-rendering="crispEdges">
    <rect x="777" y="518" width="1" height="8"/>
    <rect x="777" y="525" width="23" height="1"/>
    <rect x="799" y="518" width="1" height="8"/>
    <rect x="777" y="518" width="3" height="1"/>
    <rect x="797" y="518" width="3" height="1"/>
    <rect x="779" y="518" width="1" height="6"/>
    <rect x="779" y="523" width="19" height="1"/>
    <rect x="797" y="518" width="1" height="6"/>
    <rect x="782" y="518" width="13" height="1"/>
    <rect x="782" y="518" width="1" height="3"/>
    <rect x="782" y="520" width="3" height="1"/>
    <rect x="794" y="518" width="1" height="3"/>
    <rect x="792" y="520" width="3" height="1"/>
    <rect x="784" y="520.5" width="9" height="3.5" fill="#888"/>
  </g>
  <!-- woofer icon -->
  <g>
    <rect x="910.5" y="520" width="6.5" height="5.8" rx="2" fill="#888"/>
    <rect x="932" y="520" width="6.8" height="5.8" rx="2" fill="#888"/>
    <g fill="none" stroke="#000" stroke-width="1.2">
      <path d="M911.5,525.5 V527.5 H937.8 V525.5"/>
      <path d="M911.5,520 V518.5 H918.5 V520.3 H917"/>
      <path d="M937.8,520 V518.5 H930.7 V520.3 H932"/>
      <path d="M917,525.2 H921.3 V518.5 H928.2 V525.2 H932"/>
    </g>
  </g>
  <!-- shielded icon -->
  <rect x="909" y="540" width="31" height="15.5" fill="#fff"/>
  <g>
    <rect x="911" y="543" width="6.5" height="5.8" rx="2" fill="#888"/>
    <rect x="932" y="543" width="6.5" height="5.8" rx="2" fill="#888"/>
    <rect x="913.5" y="551" width="5.5" height="2.5" fill="#909090"/>
    <rect x="929.5" y="551" width="5.5" height="2.5" fill="#909090"/>
    <g fill="none" stroke="#000" stroke-width="1.2">
      <path d="M912.3,548.3 V550.3 H936.8 V548.3"/>
      <path d="M912.3,543 V541.6 H917.8 V543.2 H916.5"/>
      <path d="M936.8,543 V541.6 H930.5 V543.2 H932"/>
      <path d="M917.5,548.3 H921.4 V541.6 H927.7 V548.3 H932"/>
      <path d="M909.8,541.5 V553 L911,554.3 H938.5 L939.6,553 V541.5"/>
    </g>
  </g>
</svg>
<!-- INPUT PANEL -->
<div class="a" style="left:668px;top:566px;width:344px;height:77px;background:#eeeaee;border-top:1px solid #aca899;border-left:1px solid #aca899"></div>
<div class="a" style="left:668px;top:641px;width:344px;height:2px;background:#fff"></div>
<div class="btn" style="left:886px;top:569px;width:33px;height:15px;font-weight:bold"></div>
<div class="a" style="left:730px;top:585px;width:40px;height:18px;background:#fff;border:1.5px solid #000"></div>
<div class="a" style="left:730px;top:608px;width:40px;height:18px;background:#fff;border:1.5px solid #000"></div>
<div class="a" style="left:844px;top:585px;width:40px;height:18px;background:#fff;border:1.5px solid #000"></div>
<div class="a" style="left:844px;top:608px;width:40px;height:18px;background:#fff;border:1.5px solid #000"></div>
<svg width="1012" height="643" style="left:0;top:0">
  <text x="672" y="578" textLength="102" lengthAdjust="spacingAndGlyphs">Input and Distance</text>
  <line x1="670" y1="580.5" x2="776" y2="580.5" stroke="#000" stroke-width="1" shape-rendering="crispEdges"/>
  <text x="889" y="581.5" font-weight="bold" font-size="13">Std.</text>
  <text x="672.5" y="598">Distance</text>
  <text x="672.5" y="621.5">Vin(rms)</text>
  <text x="768" y="598" text-anchor="end">1.00</text>
  <text x="768" y="621.5" text-anchor="end">2.83</text>
  <text x="882" y="598" text-anchor="end">8.00</text>
  <text x="882" y="621.5" text-anchor="end">1.00</text>
  <text x="772.5" y="598">m</text>
  <text x="774" y="621.5">V</text>
  <text x="791" y="598">Zin(nom)</text>
  <text x="791" y="621.5">P(nom)</text>
  <text x="886.5" y="598">Ohms</text>
  <text x="888" y="621.5">W</text>
</svg>
<!-- ABOUT DIALOG -->
<div class="a" style="left:350px;top:236px;width:318px;height:117px;background:#ece9d8;border-top:1px solid #f4f2ea;border-left:1px solid #f4f2ea;border-right:1px solid #716f64;border-bottom:1px solid #716f64"></div>
<div class="a" style="left:351px;top:237px;width:316px;height:115px;border-top:1px solid #fff;border-left:1px solid #fff;border-right:1px solid #aca899;border-bottom:1px solid #aca899"></div>
<svg width="1012" height="643" style="left:0;top:0">
  <g transform="translate(360,248)">
    <rect x="4" y="4" width="32" height="32" fill="#c6c4c6"/>
    <path d="M6,9 L17.5,20 M34,9 L22.5,20" stroke="#000" stroke-width="2"/>
    <rect x="6.5" y="22" width="27.5" height="7.5" rx="2.5" fill="#0010d0"/>
    <rect x="6.5" y="22.8" width="5.8" height="6.5" rx="2" fill="#000"/>
    <rect x="28" y="22.8" width="5.8" height="6.5" rx="2" fill="#000"/>
    <rect x="12.3" y="23" width="5.7" height="5.3" fill="#d0c8f0"/>
    <rect x="21.8" y="23" width="6.2" height="5.3" fill="#d0c8f0"/>
    <rect x="18" y="21.5" width="3.8" height="8" fill="#0000f0"/>
    <rect x="16" y="19.8" width="2" height="5" fill="#f0f020"/>
    <rect x="22" y="19.8" width="2" height="5" fill="#f0f020"/>
    <g stroke="#e01010" stroke-width="1.3" fill="#e01010">
      <path d="M17.5,14.3 H23"/>
      <path d="M16,14.3 L18.5,12.3 L18.5,16.3 Z M24.5,14.3 L22,12.3 L22,16.3 Z" stroke="none"/>
      <path d="M30.5,14 V19"/>
      <path d="M30.5,21.5 L28.5,18.5 L32.5,18.5 Z" stroke="none"/>
      <path d="M9,32.3 H20"/>
      <path d="M7,32.3 L10,30.3 L10,34.3 Z" stroke="none"/>
      <path d="M30.5,32 V35"/>
      <path d="M30.5,30 L28.5,33 L32.5,33 Z" stroke="none"/>
    </g>
  </g>
  <text x="408" y="266">FINEMotor 2.5</text>
  <text x="366.5" y="319">Copyright (C) 2001-2006</text>
  <text x="368" y="334">Loudsoft / I - Design</text>
  <text x="596" y="301.6" textLength="51" lengthAdjust="spacingAndGlyphs">Build 383</text>
  <rect x="566" y="251" width="87" height="33" fill="#fff"/>
  <path d="M567,252 L652,267 L652,269.5 L567,269.5 Z" fill="#00107e"/>
  <text x="567" y="281.5" font-size="14" fill="#00107e" font-weight="bold" textLength="43" lengthAdjust="spacingAndGlyphs">LOUD</text>
  <text x="610.5" y="281.5" font-size="14" fill="#00107e" textLength="41.5" lengthAdjust="spacingAndGlyphs">SOFT</text>
  <!-- OK button -->
  <rect x="566.5" y="310.5" width="87" height="25" fill="#ece9d8" stroke="#000" stroke-width="1"/>
  <path d="M567.5,334.5 H652.5 V311.5" stroke="#716f64" fill="none" stroke-width="1" shape-rendering="crispEdges"/>
  <path d="M567.5,333.5 V311.5 H651.5" stroke="#fff" fill="none" stroke-width="1" shape-rendering="crispEdges"/>
  <path d="M568.5,333.5 H651.5 V312.5" stroke="#aca899" fill="none" stroke-width="1" shape-rendering="crispEdges"/>
  <rect x="570.5" y="314.5" width="79" height="17" fill="none" stroke="#000" stroke-width="1" stroke-dasharray="1 1" shape-rendering="crispEdges"/>
  <text x="609.5" y="327" text-anchor="middle">OK</text>
</svg>
</body></html>
